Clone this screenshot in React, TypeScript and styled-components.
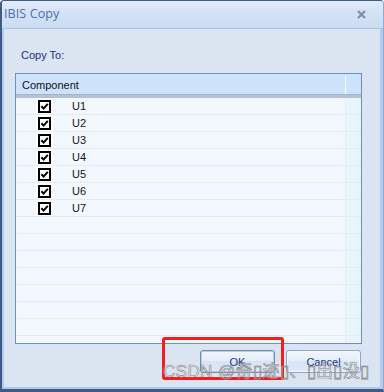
import React from "react";
import styled, { createGlobalStyle } from "styled-components";

const GlobalStyle = createGlobalStyle`
   html, body {
      margin: 0;
      padding: 0;
      background: #ffffff;
   }
   body {
      font-family: "Liberation Sans", Arial, sans-serif;
      font-size: 11px;
   }
`;

const components = ["U1", "U2", "U3", "U4", "U5", "U6", "U7"];
const TOTAL_ROWS = 15;

const CheckBox = (): JSX.Element => (
   <svg width="13" height="13" viewBox="0 0 13 13">
      <rect x="1" y="1" width="11" height="11" fill="#ffffff" stroke="#000000" strokeWidth="2" />
      <path d="M3.4 6.2 L5.6 8.6 L9.8 3.8" fill="none" stroke="#000000" strokeWidth="2" />
   </svg>
);

const App = (): JSX.Element => {
   const rows = Array.from({ length: TOTAL_ROWS }, (_, i) => components[i] ?? null);

   return (
      <>
         <GlobalStyle />
         <Window>
            <TitleBar>
               <Title>IBIS Copy</Title>
               <CloseButton>
                  <svg width="9" height="9" viewBox="0 0 9 9">
                     <path d="M1 1 L8 8 M8 1 L1 8" stroke="#7d8ea8" strokeWidth="2.2" />
                  </svg>
               </CloseButton>
            </TitleBar>
            <Body>
               <Label>Copy To:</Label>
               <Grid>
                  <GridHeader>
                     <HeaderCell>Component</HeaderCell>
                     <HeaderSplit />
                     <HeaderFiller />
                  </GridHeader>
                  <Rows>
                     {rows.map((name, i) => (
                        <Row key={i}>
                           <MainCell>
                              {name && (
                                 <>
                                    <CheckCell>
                                       <CheckBox />
                                    </CheckCell>
                                    <NameText>{name}</NameText>
                                 </>
                              )}
                           </MainCell>
                           <FillerCell />
                        </Row>
                     ))}
                  </Rows>
               </Grid>
               <Footer>
                  <DialogButton $isDefault>OK</DialogButton>
                  <DialogButton>Cancel</DialogButton>
               </Footer>
            </Body>
            <Highlight />
            <Watermark>CSDN @奇▯迹▯、▯出▯没▯</Watermark>
         </Window>
      </>
   );
};

export default App;

const Window = styled.div`
   position: relative;
   box-sizing: border-box;
   width: 384px;
   height: 392px;
   display: flex;
   flex-direction: column;
   border-top: 1px solid #3d5b87;
   border-left: 2px solid #3d5b87;
   border-bottom: 3px solid #3d5b87;
   border-right: 1px solid #8eaad6;
   border-radius: 4px 4px 0 0;
   overflow: hidden;
   background: #dbe4f1;
`;

const TitleBar = styled.div`
   height: 28px;
   flex: none;
   display: flex;
   align-items: center;
   justify-content: space-between;
   padding: 0 17px 2px 2px;
   box-sizing: border-box;
   background: linear-gradient(#e3ebf8 0%, #d6e3f5 35%, #cbdcf2 100%);
   border-bottom: 1px solid #a9c5eb;
`;

const Title = styled.span`
   font-family: "Open Sans", "Liberation Sans", sans-serif;
   font-size: 12.5px;
   color: #4f6db4;
   letter-spacing: 0.1px;
`;

const CloseButton = styled.span`
   display: flex;
   align-items: center;
   width: 9px;
   height: 9px;
   margin-top: 2px;
`;

const Body = styled.div`
   flex: 1;
   display: flex;
   flex-direction: column;
   box-sizing: border-box;
   padding: 20px 18px 0 11px;
   border-left: 2px solid #b2caec;
   border-right: 3px solid #b5ccec;
   border-bottom: 2px solid #b0c8ea;
   background: #dbe4f1;
`;

const Label = styled.div`
   height: 13px;
   line-height: 13px;
   padding-left: 6px;
   margin-bottom: 11px;
   color: #1c2f80;
   font-size: 11px;
`;

const Grid = styled.div`
   box-sizing: border-box;
   height: 271px;
   display: flex;
   flex-direction: column;
   border: 1px solid #6b8fc7;
   background: #f3f8fe;
   overflow: hidden;
`;

const GridHeader = styled.div`
   flex: none;
   height: 21px;
   display: flex;
   align-items: stretch;
   background: #cde3fb;
   border-bottom: 3px solid #b4c2d4;
   box-shadow: inset 0 -1px 0 #a5b4c8;
`;

const HeaderCell = styled.div`
   flex: 1;
   display: flex;
   align-items: center;
   padding-left: 6px;
   color: #111111;
   font-size: 11px;
`;

const HeaderSplit = styled.div`
   width: 1px;
   margin: 2px 0 1px;
   background: #ffffff;
`;

const HeaderFiller = styled.div`
   width: 15px;
`;

const Rows = styled.div`
   flex: 1;
   display: flex;
   flex-direction: column;
   overflow: hidden;
`;

const Row = styled.div`
   flex: none;
   height: 16px;
   display: flex;
   border-bottom: 1px solid #e6ebf1;
`;

const MainCell = styled.div`
   flex: 1;
   display: flex;
   align-items: center;
   padding-left: 20px;
`;

const CheckCell = styled.div`
   width: 17px;
   height: 16px;
   display: flex;
   align-items: center;
   justify-content: center;
   background: #ffffff;
`;

const NameText = styled.span`
   margin-left: 19px;
   color: #141414;
   font-size: 11px;
`;

const FillerCell = styled.div`
   width: 15px;
   border-left: 1px solid #e9edf2;
   background: #eaf4fd;
`;

const Footer = styled.div`
   display: flex;
   justify-content: flex-end;
   gap: 11px;
   margin-top: 6px;
   padding-right: 1px;
`;

const DialogButton = styled.button<{ $isDefault?: boolean }>`
   box-sizing: border-box;
   width: 75px;
   height: 23px;
   padding: 0;
   border-radius: 3px;
   border: 1px solid ${(p) => (p.$isDefault ? "#6e8cb9" : "#8aa7d0")};
   box-shadow: ${(p) => (p.$isDefault ? "inset 0 0 0 1px #b9cde9" : "inset 0 0 0 1px #f3f7fd")};
   background: linear-gradient(#f2f6fc 0%, #e6eef9 45%, #d7e4f5 50%, #dfe9f7 100%);
   color: #1b358a;
   font-family: "Liberation Sans", Arial, sans-serif;
   font-size: 11px;
`;

const Highlight = styled.div`
   position: absolute;
   left: 160px;
   top: 336px;
   width: 122px;
   height: 43px;
   box-sizing: border-box;
   border: 3px solid #f41d1d;
   border-radius: 3px;
   pointer-events: none;
`;

const Watermark = styled.div`
   position: absolute;
   left: 161px;
   top: 361px;
   font-family: "Liberation Sans", "Noto Sans CJK SC", sans-serif;
   font-size: 17px;
   line-height: 20px;
   letter-spacing: 0.4px;
   white-space: nowrap;
   color: rgba(255, 255, 255, 0.5);
   -webkit-text-stroke: 0.6px #858585;
   pointer-events: none;
`;
